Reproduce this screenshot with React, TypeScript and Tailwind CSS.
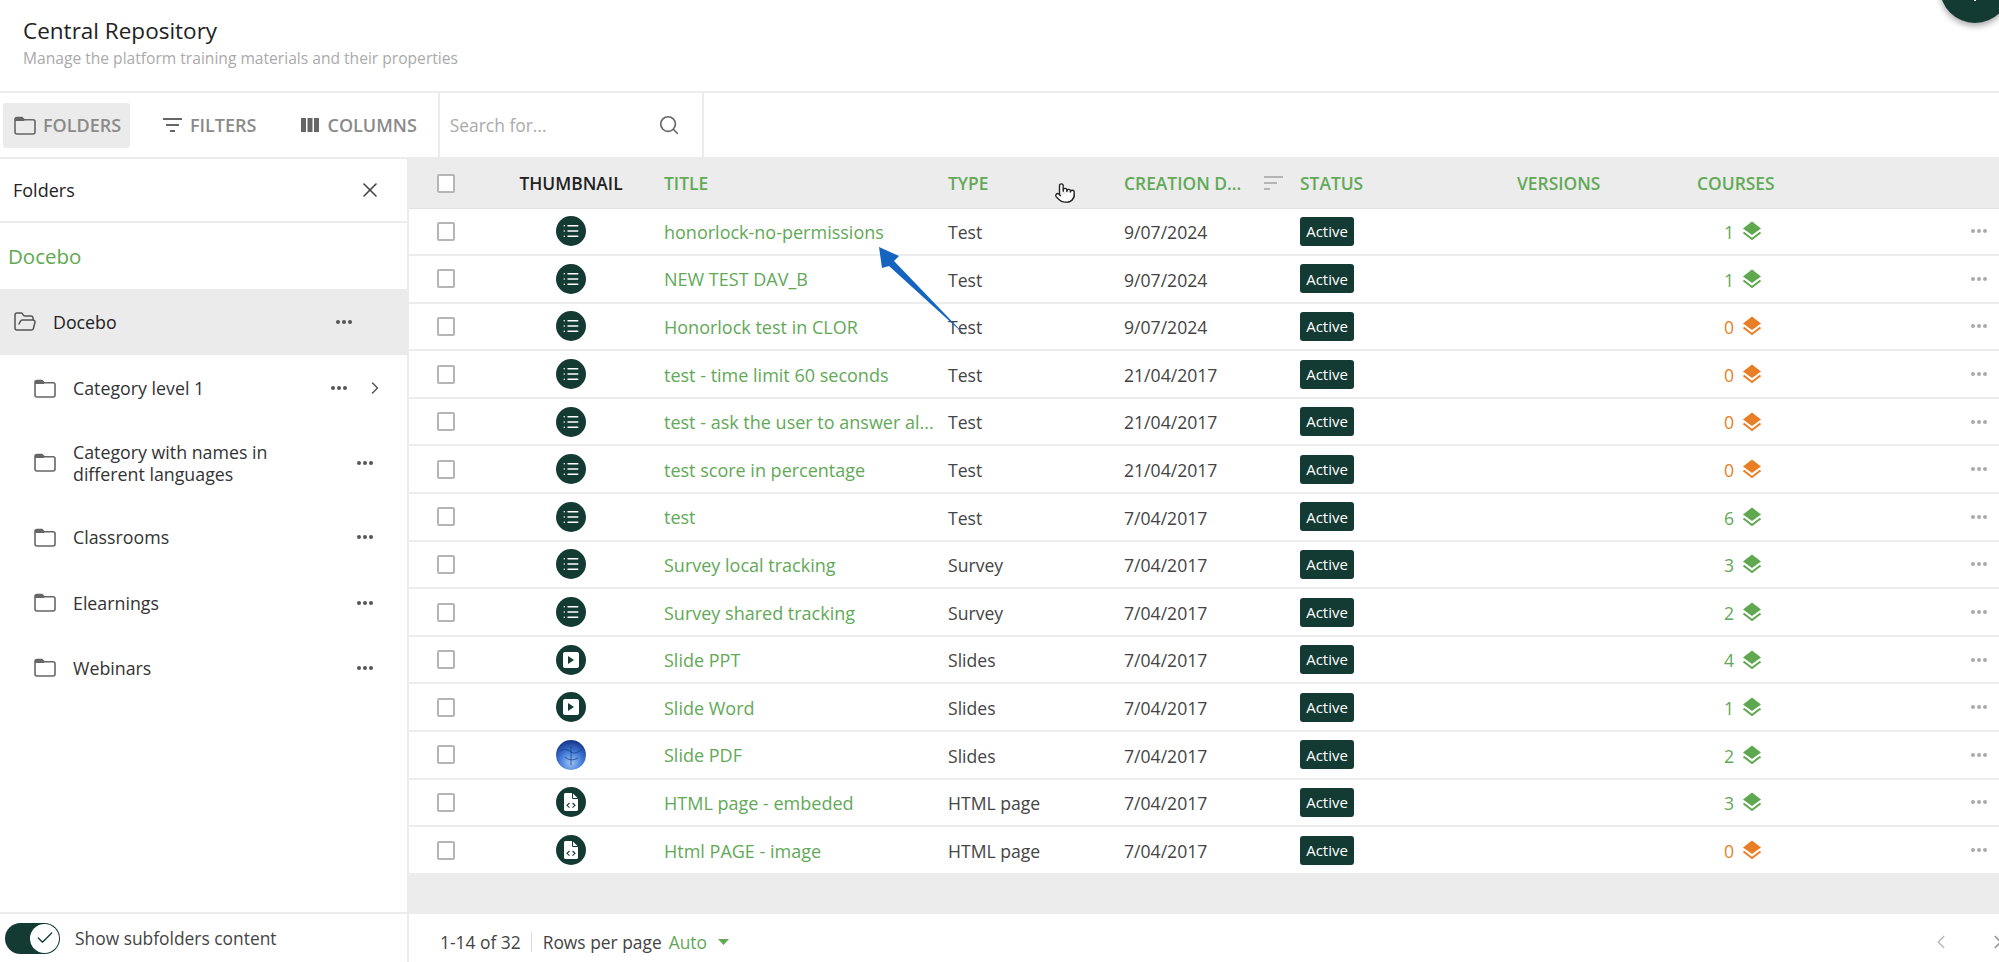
import React from 'react';
import { Search, X, ChevronRight, ChevronLeft, FolderOpen, Check, Pointer, List } from 'lucide-react';

const rows = [
  { title: 'honorlock-no-permissions', type: 'Test', date: '9/07/2024', courses: 1, thumb: 'list' },
  { title: 'NEW TEST DAV_B', type: 'Test', date: '9/07/2024', courses: 1, thumb: 'list' },
  { title: 'Honorlock test in CLOR', type: 'Test', date: '9/07/2024', courses: 0, thumb: 'list' },
  { title: 'test - time limit 60 seconds', type: 'Test', date: '21/04/2017', courses: 0, thumb: 'list' },
  { title: 'test - ask the user to answer al...', type: 'Test', date: '21/04/2017', courses: 0, thumb: 'list' },
  { title: 'test score in percentage', type: 'Test', date: '21/04/2017', courses: 0, thumb: 'list' },
  { title: 'test', type: 'Test', date: '7/04/2017', courses: 6, thumb: 'list' },
  { title: 'Survey local tracking', type: 'Survey', date: '7/04/2017', courses: 3, thumb: 'list' },
  { title: 'Survey shared tracking', type: 'Survey', date: '7/04/2017', courses: 2, thumb: 'list' },
  { title: 'Slide PPT', type: 'Slides', date: '7/04/2017', courses: 4, thumb: 'slide' },
  { title: 'Slide Word', type: 'Slides', date: '7/04/2017', courses: 1, thumb: 'slide' },
  { title: 'Slide PDF', type: 'Slides', date: '7/04/2017', courses: 2, thumb: 'image' },
  { title: 'HTML page - embeded', type: 'HTML page', date: '7/04/2017', courses: 3, thumb: 'html' },
  { title: 'Html PAGE - image', type: 'HTML page', date: '7/04/2017', courses: 0, thumb: 'html' },
];

const folders = [
  { name: 'Category level 1', h: 'h-[66px]', chevron: true },
  { name: 'Category with names in different languages', h: 'h-[83px]' },
  { name: 'Classrooms', h: 'h-[66px]' },
  { name: 'Elearnings', h: 'h-[65px]' },
  { name: 'Webinars', h: 'h-[65px]' },
];

const gridCols = 'grid grid-cols-[107px_110px_322px_176px_176px_217px_180px_1fr] items-center';

const Dots = ({ color = 'bg-[#555]' }: { color?: string }) => (
  <span className="flex gap-[2px]">
    <span className={`w-[4px] h-[4px] rounded-full ${color}`} />
    <span className={`w-[4px] h-[4px] rounded-full ${color}`} />
    <span className={`w-[4px] h-[4px] rounded-full ${color}`} />
  </span>
);

const FolderIcon = ({ className = 'text-[#666]' }: { className?: string }) => (
  <svg width="22" height="19" viewBox="0 0 22 19" className={className}>
    <path d="M1 3.500c0-1.200.8-2 2-2h5l2.200 2.200H19c1.200 0 2 .8 2 2V16c0 1.200-.8 2-2 2H3c-1.200 0-2-.8-2-2z" fill="none" stroke="currentColor" strokeWidth="1.600" />
    <path d="M1 5V3.500c0-1.200.8-2 2-2h5l2.200 2.200V5z" fill="currentColor" />
  </svg>
);

const Checkbox = () => (
  <span className="block w-[18px] h-[19px] rounded-[2px] border-2 border-[#b5b5b5] bg-white" />
);

const Layers = ({ color }: { color: string }) => (
  <svg width="20" height="20" viewBox="0 0 20 20">
    <path d="M10 0.500 19 7.500 10 14 1 7.500z" fill={color} />
    <path d="M1.500 11.500 10 18 18.500 11.500" fill="none" stroke={color} strokeWidth="2" />
  </svg>
);

const Thumb = ({ kind }: { kind: string }) => {
  if (kind === 'image') {
    return (
      <svg width="30" height="30" viewBox="0 0 30 30">
        <defs>
          <radialGradient id="globe" cx="50%" cy="75%" r="70%">
            <stop offset="0%" stopColor="#9cc4f4" />
            <stop offset="55%" stopColor="#3f78d6" />
            <stop offset="100%" stopColor="#1c3a8f" />
          </radialGradient>
        </defs>
        <circle cx="15" cy="15" r="15" fill="url(#globe)" />
        <path d="M4 11c5-3 8-1 11 1s7 1 11-3M15 6v19M9 17c3 3 8 4 13 1" fill="none" stroke="#1b3f86" strokeWidth="0.800" />
      </svg>
    );
  }
  return (
    <span className="w-[30px] h-[30px] rounded-full bg-[#133b33] flex items-center justify-center">
      {kind === 'list' && <List size={18} strokeWidth={2} className="text-white" />}
      {kind === 'slide' && (
        <span className="w-[16px] h-[16px] rounded-[2px] bg-white flex items-center justify-center">
          <svg width="6" height="8" viewBox="0 0 6 8"><path d="M0 0 6 4 0 8z" fill="#133b33" /></svg>
        </span>
      )}
      {kind === 'html' && (
        <svg width="14" height="18" viewBox="0 0 14 18">
          <path d="M1.500 0H8.500L14 5.500V16.500C14 17.300 13.300 18 12.500 18H1.500C.7 18 0 17.300 0 16.500V1.500C0 .7.7 0 1.500 0z" fill="#fff" />
          <path d="M8.500 0V5.500H14" fill="none" stroke="#133b33" strokeWidth="1" />
          <path d="M5.500 10 3 12.300 5.500 14.600M8.500 10 11 12.300 8.500 14.600" fill="none" stroke="#133b33" strokeWidth="1.100" />
        </svg>
      )}
    </span>
  );
};

const App: React.FC = () => {
  return (
    <div className="relative h-[962px] w-[1999px] overflow-hidden bg-white font-['Open_Sans',sans-serif] text-[#333]">
      {/* Header */}
      <header className="h-[93px] border-b-2 border-[#ececec] pl-[23px] pt-[15px]">
        <h1 className="text-[22.500px] leading-[32px] text-[#222]">Central Repository</h1>
        <p className="text-[15.600px] leading-[20px] mt-[1px] text-[#aaa]">Manage the platform training materials and their properties</p>
      </header>

      {/* Toolbar */}
      <div className="h-[66px] border-b-2 border-[#ececec] flex items-center">
        <button className="ml-[3px] w-[127px] h-[45px] rounded-[3px] bg-[#ebebeb] flex items-center pl-[11px] gap-[7px] text-[18px] font-semibold text-[#8a8a8a]">
          <FolderIcon />
          FOLDERS
        </button>
        <button className="ml-[33px] flex items-center gap-[8px] text-[18px] font-semibold text-[#8a8a8a]">
          <svg width="19" height="14" viewBox="0 0 19 14"><path d="M0 0h19v2H0zM3 6h13v2H3zM7 12h5v2H7z" fill="#666" /></svg>
          FILTERS
        </button>
        <button className="ml-[45px] flex items-center gap-[8px] text-[18px] font-semibold text-[#8a8a8a]">
          <svg width="18" height="14" viewBox="0 0 18 14"><path d="M0 0h5v14H0zM6.500 0h5v14h-5zM13 0h5v14h-5z" fill="#666" /></svg>
          COLUMNS
        </button>
        <div className="ml-[21px] w-[266px] h-full border-x-2 border-[#ececec] flex items-center pl-[10px] pr-[22px] justify-between">
          <span className="text-[17.400px] text-[#aaa]">Search for...</span>
          <Search size={22} strokeWidth={1.800} className="text-[#666]" />
        </div>
      </div>

      <div className="flex h-[803px]">
        {/* Sidebar */}
        <aside className="w-[409px] shrink-0 border-r-2 border-[#ececec] flex flex-col">
          <div className="h-[64px] shrink-0 border-b-2 border-[#ececec] flex items-center justify-between pl-[13px] pr-[25px]">
            <span className="text-[18px] font-medium text-[#222]">Folders</span>
            <X size={24} strokeWidth={1.600} className="text-[#444]" />
          </div>
          <div className="h-[66px] shrink-0 flex items-center pl-[8px] text-[20.500px] text-[#5fa84f]">Docebo</div>
          <div className="h-[66px] shrink-0 bg-[#ebebeb] flex items-center pl-[13px] pr-[55px]">
            <FolderOpen size={24} strokeWidth={1.500} className="text-[#555]" />
            <span className="ml-[16px] flex-1 text-[17.800px] font-medium text-[#222]">Docebo</span>
            <Dots />
          </div>
          <div className="flex-1">
            {folders.map((f) => (
              <div key={f.name} className={`${f.h} flex items-center pl-[34px] ${f.chevron ? 'pr-[22px]' : 'pr-[34px]'}`}>
                <FolderIcon />
                <span className="ml-[17px] flex-1 pr-[40px] text-[17.800px] leading-[22px] font-medium text-[#333]">{f.name}</span>
                <Dots />
                {f.chevron && <ChevronRight size={20} strokeWidth={1.800} className="ml-[18px] text-[#555]" />}
              </div>
            ))}
          </div>
          <div className="h-[50px] shrink-0 border-t-2 border-[#ececec] flex items-center pl-[5px]">
            <span className="w-[55px] h-[31px] rounded-full bg-[#133b33] flex items-center justify-end pr-[1px]">
              <span className="w-[29px] h-[29px] rounded-full bg-white flex items-center justify-center">
                <Check size={20} strokeWidth={1.600} className="text-[#133b33]" />
              </span>
            </span>
            <span className="ml-[15px] text-[17.400px] text-[#444]">Show subfolders content</span>
          </div>
        </aside>

        {/* Table */}
        <section className="flex-1 min-w-0 flex flex-col">
          <div className={`${gridCols} h-[49.500px] shrink-0 bg-[#ececec] border-b border-[#e2e2e2] text-[17.400px] font-semibold text-[#62a957]`}>
            <span className="pl-[28px]"><Checkbox /></span>
            <span className="text-center text-[#222]">THUMBNAIL</span>
            <span className="pl-[38px]">TITLE</span>
            <span>TYPE</span>
            <span className="flex items-center justify-between pr-[17px]">
              <span>CREATION D...</span>
              <svg width="19" height="14" viewBox="0 0 19 14"><path d="M0 0h19v2H0zM0 6h13v2H0zM0 12h6v2H0z" fill="#b5b5b5" /></svg>
            </span>
            <span>STATUS</span>
            <span>VERSIONS</span>
            <span>COURSES</span>
          </div>
          {rows.map((r) => (
            <div key={r.title} className={`${gridCols} h-[47.600px] shrink-0 border-b-2 border-[#ececec] text-[17.600px]`}>
              <span className="pl-[28px]"><Checkbox /></span>
              <span className="flex justify-center"><Thumb kind={r.thumb} /></span>
              <span className="pl-[38px] pt-[2px] text-[18px] font-medium text-[#62a957] whitespace-nowrap">{r.title}</span>
              <span className="pt-[2px] text-[#444]">{r.type}</span>
              <span className="pt-[2px] text-[#444]">{r.date}</span>
              <span className="flex">
                <span className="inline-flex items-center justify-center w-[54px] h-[29px] rounded-[3px] bg-[#133b33] text-white text-[15px] font-medium">Active</span>
              </span>
              <span />
              <span className="flex items-center justify-between pr-[12px]">
                <span className={`flex items-center gap-[8px] pl-[27px] ${r.courses === 0 ? 'text-[#e87f24]' : 'text-[#62a957]'}`}>
                  <span className="w-[10px] pt-[2px] text-[17.600px]">{r.courses}</span>
                  <Layers color={r.courses === 0 ? '#e87f24' : '#5fa84f'} />
                </span>
                <Dots color="bg-[#aaa]" />
              </span>
            </div>
          ))}
          <div className="h-[39px] shrink-0 bg-[#ececec]" />
          <div className="h-[48px] shrink-0 flex items-center pt-[8px] pl-[31px] text-[17.400px] text-[#444]">
            <span>1-14 of 32</span>
            <span className="ml-[10px] w-px h-[20px] bg-[#ddd]" />
            <span className="ml-[11px]">Rows per page</span>
            <span className="ml-[7px] text-[#62a957]">Auto</span>
            <svg className="ml-[11px]" width="11" height="6" viewBox="0 0 11 6"><path d="M0 0h11L5.500 6z" fill="#62a957" /></svg>
            <span className="flex-1" />
            <ChevronLeft size={22} strokeWidth={1.800} className="text-[#bbb]" />
            <ChevronRight size={22} strokeWidth={1.800} className="ml-[35px] mr-[-10px] text-[#999]" />
          </div>
        </section>
      </div>

      {/* Floating add button, cut off by the top of the page */}
      <div className="absolute left-[1940px] top-[-47px] w-[70px] h-[70px] rounded-full bg-[#133b33] shadow-[0_3px_6px_rgba(0,0,0,0.35)] flex items-end justify-center pb-[22px]">
        <span className="block w-[2px] h-[4px] bg-white" />
      </div>

      {/* Annotation arrow drawn on the screenshot */}
      <svg className="absolute left-[870px] top-[240px]" width="105" height="105" viewBox="0 0 105 105">
        <path d="M9 7 29 16 24 21 97 97 19 26 12 28z" fill="#1565c0" />
      </svg>

      {/* Mouse cursor */}
      <Pointer size={22} strokeWidth={1.500} className="absolute left-[1054px] top-[182px] text-[#222] fill-white" />
    </div>
  );
};

export default App;
